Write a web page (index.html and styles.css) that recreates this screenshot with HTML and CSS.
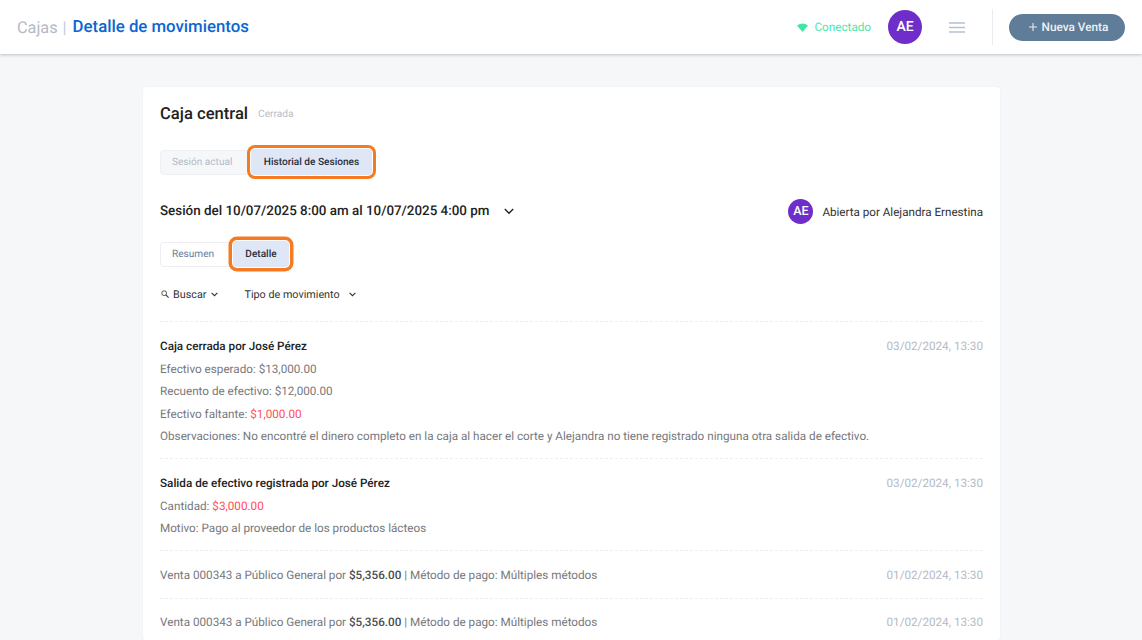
FILE: index.html
```html
<!DOCTYPE html>
<html lang="es">
<head>
<meta charset="utf-8">
<title>Detalle de movimientos</title>
<link rel="stylesheet" href="styles.css">
</head>
<body>
<header class="topbar">
  <div class="crumbs"><span class="crumb-muted">Cajas</span><span class="crumb-sep">|</span><span class="crumb-main">Detalle de movimientos</span></div>
  <div class="top-actions">
    <div class="status">
      <svg class="wifi" width="11" height="9" viewBox="0 0 11 9"><path d="M0 2.6 Q5.5 -1.6 11 2.6 L5.5 9 Z" fill="#3ee8a4"/></svg>
      <span>Conectado</span>
    </div>
    <div class="avatar avatar-lg">AE</div>
    <svg class="menu" width="16" height="11" viewBox="0 0 16 11"><path d="M0 1H16M0 5.5H16M0 10H16" stroke="#b4c2d1" stroke-width="1.5"/></svg>
    <div class="vline"></div>
    <button class="new-sale"><svg width="8" height="8" viewBox="0 0 8 8"><path d="M4 0V8M0 4H8" stroke="#e8edf2" stroke-width="1.1"/></svg><span>Nueva Venta</span></button>
  </div>
</header>
<main class="page">
  <section class="card">
    <div class="title-row"><h1>Caja central</h1><span class="closed">Cerrada</span></div>
    <div class="tabs tabs-top">
      <span class="tab tab-off">Sesión actual</span>
      <span class="tab tab-on tab-hist">Historial de Sesiones</span>
    </div>
    <div class="session-row">
      <div class="session-name"><span>Sesión del 10/07/2025 8:00 am al 10/07/2025 4:00 pm</span>
        <svg width="10" height="7" viewBox="0 0 10 7"><path d="M.8 1L5 5.2L9.2 1" fill="none" stroke="#222" stroke-width="1.4"/></svg></div>
      <div class="opened"><div class="avatar avatar-sm">AE</div><span>Abierta por Alejandra Ernestina</span></div>
    </div>
    <div class="tabs tabs-sub">
      <span class="tab tab-white">Resumen</span>
      <span class="tab tab-on tab-det">Detalle</span>
    </div>
    <div class="filters">
      <span class="filter filter-search">
        <svg class="loupe" width="8" height="8" viewBox="0 0 8 8"><circle cx="3.2" cy="3.2" r="2.4" fill="none" stroke="#444" stroke-width=".9"/><path d="M5 5L7.6 7.6" stroke="#444" stroke-width="1.1"/></svg>
        <span>Buscar</span>
        <svg class="caret" width="7" height="5" viewBox="0 0 7 5"><path d="M.6 .8L3.5 3.7L6.4 .8" fill="none" stroke="#333" stroke-width="1.1"/></svg>
      </span>
      <span class="filter filter-type"><span>Tipo de movimiento</span>
        <svg class="caret" width="7" height="5" viewBox="0 0 7 5"><path d="M.6 .8L3.5 3.7L6.4 .8" fill="none" stroke="#333" stroke-width="1.1"/></svg>
      </span>
    </div>
    <div class="entries">
      <article class="entry entry-close">
        <div class="entry-body">
          <p class="entry-title">Caja cerrada por José Pérez</p>
          <p>Efectivo esperado: $13,000.00</p>
          <p>Recuento de efectivo: $12,000.00</p>
          <p>Efectivo faltante: <span class="red">$1,000.00</span></p>
          <p>Observaciones: No encontré el dinero completo en la caja al hacer el corte y Alejandra no tiene registrado ninguna otra salida de efectivo.</p>
        </div>
        <time>03/02/2024, 13:30</time>
      </article>
      <article class="entry entry-out">
        <div class="entry-body">
          <p class="entry-title">Salida de efectivo registrada por José Pérez</p>
          <p>Cantidad: <span class="red">$3,000.00</span></p>
          <p>Motivo: Pago al proveedor de los productos lácteos</p>
        </div>
        <time>03/02/2024, 13:30</time>
      </article>
      <article class="entry entry-sale">
        <div class="entry-body"><p>Venta 000343 a Público General por <b>$5,356.00</b> | Método de pago: Múltiples métodos</p></div>
        <time>01/02/2024, 13:30</time>
      </article>
      <article class="entry entry-last">
        <div class="entry-body"><p>Venta 000343 a Público General por <b>$5,356.00</b> | Método de pago: Múltiples métodos</p></div>
        <time>01/02/2024, 13:30</time>
      </article>
    </div>
  </section>
</main>
</body>
</html>
```
FILE: styles.css
```css
* { box-sizing: border-box; }
html, body { margin: 0; height: 640px; overflow: hidden; }
body { background: #f6f7f9; font-family: Roboto, "Liberation Sans", sans-serif; color: #222; text-rendering: geometricPrecision; }
p, h1 { margin: 0; }

.topbar { height: 54px; background: #fff; box-shadow: 0 1px 3px rgba(40,50,70,.28); display: flex; align-items: center; justify-content: space-between; padding: 0 17px; position: relative; }
.crumbs { display: flex; align-items: center; }
.crumb-muted { color: #b4bac6; font-size: 16.3px; }
.crumb-sep { color: #c2cad6; font-size: 16.3px; margin: 0 6px 0 5px; }
.crumb-main { color: #0b66d0; font-weight: 500; font-size: 16.8px; }
.top-actions { display: flex; align-items: center; }
.status { display: flex; align-items: center; gap: 7px; color: #4ce8ac; font-size: 11.7px; }
.avatar { border-radius: 50%; background: #6f2dc9; color: #fff; display: flex; align-items: center; justify-content: center; font-weight: 500; }
.avatar-lg { width: 34px; height: 34px; font-size: 14px; margin-left: 17px; }
.avatar-sm { width: 25px; height: 25px; font-size: 12.5px; }
.menu { margin-left: 27px; }
.vline { width: 1px; height: 36px; background: #e9ecf0; margin-left: 27px; }
.new-sale { margin-left: 16px; width: 116px; height: 27px; border: 0; border-radius: 14px; background: #5f7c99; color: #eef2f5; font: 500 11.8px Roboto, sans-serif; text-rendering: geometricPrecision; display: flex; align-items: center; justify-content: center; gap: 5px; padding: 0 0 0 3px; }

.page { padding: 33px 142px 0 143px; }
.card { background: #fff; border-radius: 4px; padding: 17px 17px 0; height: 553px; box-shadow: 0 0 2px rgba(40,50,70,.05); }
.title-row { display: flex; align-items: center; gap: 10px; height: 21px; }
h1 { font-size: 16.6px; font-weight: 500; color: #222; }
.closed { font-size: 10.2px; color: #b9bec7; }

.tabs { display: flex; align-items: center; font-size: 10.1px; }
.tabs-top { margin-top: 24px; }
.tab { height: 26px; display: flex; align-items: center; border-radius: 4px; }
.tab-off { width: 91px; height: 25px; padding-left: 11px; background: #f6f7f9; color: #b3bac6; border: 1px solid #eef0f4; }
.tab-white { width: 73px; height: 25px; padding-left: 11px; background: #fff; border: 1px solid #eceef2; color: #65809c; }
.tab-on { justify-content: center; background: #dfe6f5; color: #2a2f3a; font-weight: 500; border-radius: 4px; position: relative; box-shadow: 0 0 0 1px #fff, 0 0 0 4px #f57a22; }
.tab-hist { width: 121px; }
.tab-det { width: 56px; box-shadow: 0 0 0 1px #fff, 0 0 0 4.5px #f57a22; }

.session-row { display: flex; justify-content: space-between; align-items: center; margin-top: 24px; height: 25px; }
.session-name { display: flex; align-items: center; gap: 14px; font-size: 13.4px; font-weight: 500; }
.opened { display: flex; align-items: center; gap: 9px; font-size: 11.65px; color: #333; }

.tabs-sub { margin-top: 17px; }
.filters { display: flex; align-items: center; margin-top: 19px; height: 16px; font-size: 10.8px; color: #333; }
.filter { display: flex; align-items: center; }
.loupe { margin: 0 4px 0 1px; }
.filter-search .caret { margin-left: 5px; }
.filter-type { margin-left: 26px; }
.filter-type .caret { margin-left: 9px; }

.entries { margin-top: 19px; }
.entry { display: flex; justify-content: space-between; border-top: 1px dashed #eceef1; font-size: 11.7px; line-height: 22.5px; color: #76787c; }
.entry-close { height: 137px; padding-top: 13px; }
.entry-out { height: 92px; padding-top: 13px; }
.entry-sale { height: 48px; align-items: center; padding-top: 1px; }
.entry-last { height: 42px; padding-top: 12px; }
.entry-title { color: #222; font-weight: 500; }
.red { color: #ff4d55; }
.entry b { font-weight: 500; color: #4a4c50; }
time { color: #b5bac3; white-space: nowrap; flex: none; }
```
